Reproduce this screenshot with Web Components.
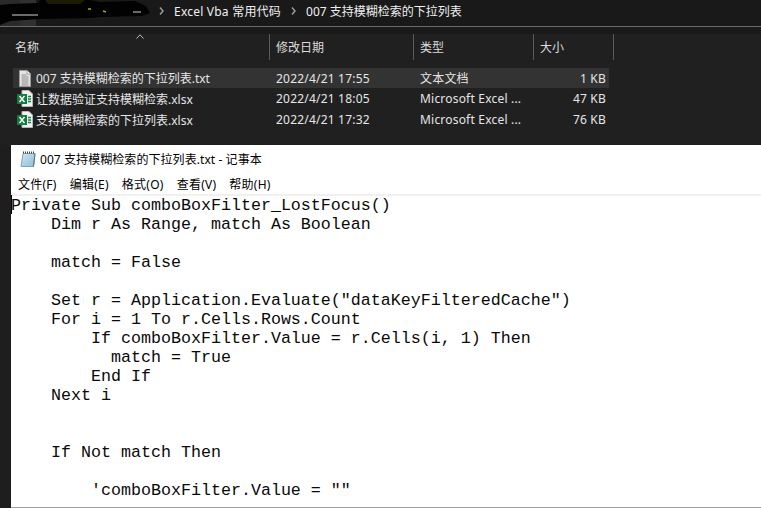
<!DOCTYPE html>
<html><head><meta charset="utf-8"><title>Explorer and Notepad</title>
<style>
html,body{margin:0;padding:0;background:#1e1e1e;overflow:hidden}
body{width:761px;height:508px;display:flex;flex-direction:column;font-family:"Noto Sans","Noto Sans CJK SC",sans-serif}
</style></head><body>
<x-explorer>
  <x-breadcrumb slot="crumb">
    <span style="letter-spacing:.22px">Excel Vba 常用代码</span>
    <span>007 支持模糊检索的下拉列表</span>
  </x-breadcrumb>
  <x-file-row selected icon="txt" name="007 支持模糊检索的下拉列表.txt" date="2022/4/21 17:55" type="文本文档" size="1 KB"></x-file-row>
  <x-file-row icon="xls" name="让数据验证支持模糊检索.xlsx" date="2022/4/21 18:05" type="Microsoft Excel ..." size="47 KB"></x-file-row>
  <x-file-row icon="xls" name="支持模糊检索的下拉列表.xlsx" date="2022/4/21 17:32" type="Microsoft Excel ..." size="76 KB"></x-file-row>
</x-explorer>
<x-notepad title-text="007 支持模糊检索的下拉列表.txt - 记事本">Private Sub comboBoxFilter_LostFocus()
    Dim r As Range, match As Boolean

    match = False

    Set r = Application.Evaluate("dataKeyFilteredCache")
    For i = 1 To r.Cells.Rows.Count
        If comboBoxFilter.Value = r.Cells(i, 1) Then
          match = True
        End If
    Next i


    If Not match Then

        'comboBoxFilter.Value = ""</x-notepad>
<script>
const def=(name,html,extra)=>{customElements.define(name,class extends HTMLElement{
  constructor(){super();this.attachShadow({mode:'open'}).innerHTML=typeof html==='function'?html(this):html}
  connectedCallback(){if(extra)extra(this)}
})};
const CHEV='<path d="M1 .5L4 4 1 7.5" fill="none" stroke="#9a9a9a" stroke-width="1.5"/>';
def('x-breadcrumb',`<style>
:host{display:flex;align-items:center;height:27px;box-sizing:border-box;padding-bottom:4px;border-bottom:1px solid #6a6a6a;background:#191919;color:#f0f0f0;font-size:12px;position:relative}
.blob{position:absolute;left:0;top:0;width:150px;height:26px}
.sp{flex:none;width:159px}
.chev{flex:none;margin-right:10px}
::slotted(span){white-space:nowrap}
</style>
<svg class="blob" viewBox="0 0 150 26"><rect x="20" y="0" width="16" height="26" fill="#303030"/><rect x="0" y="0" width="20" height="26" fill="#2a2a2a"/>
<path d="M40 0H90L100 2 135 1 146 6 150 13 142 16 100 17 90 18 40 19 10 21 0 25V5L10 4 38 3Z" fill="#020202"/><path d="M45 0h40l-5 4H48Z" fill="#1c1c04"/><path d="M88 9h3M103 11l3 1" stroke="#a5a525" stroke-width="1.5"/><path d="M12 15h26M133 12h8" stroke="#cfcfcf"/></svg>
<span class="sp"></span>
<svg class="chev" width="5" height="8" viewBox="0 0 5 8">${CHEV}</svg>
<slot></slot>`,el=>{
  const spans=[...el.querySelectorAll('span')];
  if(spans[1]&&!el.querySelector('svg')){
    const c=document.createElementNS('http://www.w3.org/2000/svg','svg');
    c.setAttribute('width','5');c.setAttribute('height','8');c.setAttribute('viewBox','0 0 5 8');
    c.style.cssText='margin:0 10px;flex:none';
    c.innerHTML=CHEV;
    el.insertBefore(c,spans[1]);
  }
});
def('x-explorer',`<style>
:host{display:flex;flex-direction:column;height:145px;flex:none;background:#1a1a1a;color:#e8e8e8}
.body{flex:1;background:#202020;margin-top:7px}
.head{display:grid;grid-template-columns:270px 144px 120px 80px;width:614px;height:26px;font-size:12px;color:#dcdcdc;position:relative}
.head div{display:flex;align-items:center;box-sizing:border-box;padding-left:6px;border-right:1px solid #5a5a5a}
.head div.first{padding-left:15px}
.head svg{position:absolute;left:136px;top:0}
.rows{padding-top:8px;display:flex;flex-direction:column}
</style>
<slot name="crumb"></slot>
<div class="body"><div class="head">
<svg width="8" height="5" viewBox="0 0 8 5"><path d="M.5 4.5L4 .8 7.5 4.5" fill="none" stroke="#bdbdbd"/></svg>
<div class="first">名称</div><div>修改日期</div><div>类型</div><div>大小</div></div>
<div class="rows"><slot></slot></div></div>`);
const ICONS={txt:`<svg width="12" height="17" viewBox="0 0 12 17"><path d="M.5.5H8L11.5 4V16.5H.5Z" fill="#e4e4e4" stroke="#9a9a9a"/><path d="M8 .5V4H11.5" fill="#fff" stroke="#9a9a9a"/><path d="M2.5 5h5M2.5 7h7M2.5 9h7M2.5 11h7M2.5 13h7M2.5 15h7" stroke="#8c8c8c"/></svg>`,
xls:`<svg width="17" height="17" viewBox="0 0 17 17"><path d="M5 .5H12L15.5 4V16.5H5Z" fill="#f2f2f2" stroke="#b5b5b5"/><path d="M11 6.5h3M11 9h3M11 11.5h3" stroke="#1f7a45" stroke-width="1.4"/><rect x="0" y="4" width="10" height="10" fill="#107c41"/><path d="M2.5 6L7.5 12M7.5 6L2.5 12" stroke="#fff" stroke-width="1.4"/></svg>`};
def('x-file-row',el=>{const a=n=>el.getAttribute(n)||'';return `<style>
:host{display:grid;grid-template-columns:257px 144px 120px 75px;width:596px;height:21px;margin-left:13px;box-sizing:border-box;padding-bottom:2px;align-items:center;font-size:12px;color:#e6e6e6;white-space:nowrap}
:host([selected]){background:#333;height:20px;padding-bottom:0;margin-bottom:1px}
.n{display:flex;align-items:center}
.i{width:20px;display:flex;justify-content:center;margin-left:2px;margin-right:1px;flex:none;height:15px;align-items:center}
.d{padding-left:6px;letter-spacing:.2px}.t{padding-left:6px;letter-spacing:.2px}.s{text-align:right;padding-right:3px;letter-spacing:.2px}
</style><div class="n"><span class="i">${ICONS[a('icon')]}</span><span>${a('name')}</span></div><div class="d">${a('date')}</div><div class="t">${a('type')}</div><div class="s">${a('size')}</div>`});
def('x-notepad',el=>`<style>
:host{display:flex;flex-direction:column;flex:1;min-height:0;margin-left:11px;background:#fff;color:#000;overflow:hidden;border-bottom:1px solid #a0a0a0;position:relative}
.title{height:28px;display:flex;align-items:center;gap:4px;padding-left:9px;font-size:12px;flex:none;letter-spacing:.07px}
.menu{height:20px;display:flex;align-items:center;gap:13px;padding-left:7px;padding-top:1px;font-size:12px;border-bottom:2px solid #f0f0f0;flex:none;letter-spacing:.25px}
pre{margin:0;font:16.67px/19px "Liberation Mono","Noto Sans CJK SC",monospace;white-space:pre;padding:0;color:#0a0a0a}
.caret{position:absolute;left:0;top:50px;width:1px;height:19px;background:#000}
</style><div class="title"><svg width="16" height="16" viewBox="0 0 16 16"><defs><linearGradient id="g" x1="0" y1="0" x2="1" y2="1"><stop offset="0" stop-color="#cfe6f3"/><stop offset="1" stop-color="#8fbcd8"/></linearGradient></defs><path d="M3 2.5H15L13.5 15.5H1Z" fill="url(#g)" stroke="#7fa6bf"/><path d="M13.5 15.5L15 2.5" stroke="#5f6f60"/><path d="M3 1.5h12" stroke="#444" stroke-dasharray="1 1" stroke-width="2"/></svg><span>${el.getAttribute('title-text')}</span></div>
<div class="menu"><span>文件(F)</span><span>编辑(E)</span><span>格式(O)</span><span>查看(V)</span><span>帮助(H)</span></div>
<div class="caret"></div>
<pre><slot></slot></pre>`);
</script>
</body></html>
